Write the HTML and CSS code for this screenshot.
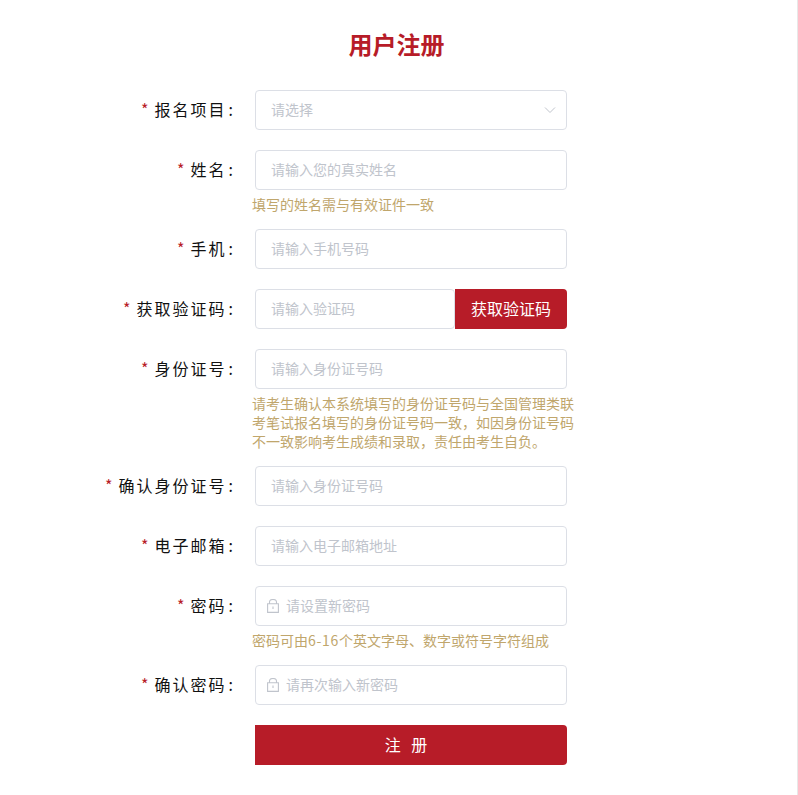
FILE: index.html
```html
<!DOCTYPE html>
<html lang="zh-CN">
  <head>
    <meta charset="UTF-8" />
    <meta name="viewport" content="width=device-width, initial-scale=1.0" />
    <title>用户注册</title>
    <link rel="stylesheet" href="styles.css">
  </head>
  <body>
    <div class="page">
      <h1 class="title">用户注册</h1>
      <form class="form">
        <div class="row">
          <label class="label"><span class="star">*</span>报名项目<span class="colon">:</span></label>
          <div class="field">
            <div class="input-box">
              <input type="text" placeholder="请选择" readonly />
              <svg class="arrow" viewBox="0 0 12 12" width="12" height="12">
                <path d="M1 3.5 6 8.5 11 3.5" fill="none" stroke="#c0c4cc" stroke-width="1" />
              </svg>
            </div>
          </div>
        </div>
        <div class="row">
          <label class="label"><span class="star">*</span>姓名<span class="colon">:</span></label>
          <div class="field">
            <div class="input-box"><input type="text" placeholder="请输入您的真实姓名" /></div>
            <p class="hint">填写的姓名需与有效证件一致</p>
          </div>
        </div>
        <div class="row">
          <label class="label"><span class="star">*</span>手机<span class="colon">:</span></label>
          <div class="field">
            <div class="input-box"><input type="text" placeholder="请输入手机号码" /></div>
          </div>
        </div>
        <div class="row">
          <label class="label"><span class="star">*</span>获取验证码<span class="colon">:</span></label>
          <div class="field code-field">
            <div class="input-box"><input type="text" placeholder="请输入验证码" /></div>
            <button type="button" class="btn-code">获取验证码</button>
          </div>
        </div>
        <div class="row">
          <label class="label"><span class="star">*</span>身份证号<span class="colon">:</span></label>
          <div class="field">
            <div class="input-box"><input type="text" placeholder="请输入身份证号码" /></div>
            <p class="hint">请考生确认本系统填写的身份证号码与全国管理类联考笔试报名填写的身份证号码一致，如因身份证号码不一致影响考生成绩和录取，责任由考生自负。</p>
          </div>
        </div>
        <div class="row">
          <label class="label"><span class="star">*</span>确认身份证号<span class="colon">:</span></label>
          <div class="field">
            <div class="input-box"><input type="text" placeholder="请输入身份证号码" /></div>
          </div>
        </div>
        <div class="row">
          <label class="label"><span class="star">*</span>电子邮箱<span class="colon">:</span></label>
          <div class="field">
            <div class="input-box"><input type="text" placeholder="请输入电子邮箱地址" /></div>
          </div>
        </div>
        <div class="row">
          <label class="label"><span class="star">*</span>密码<span class="colon">:</span></label>
          <div class="field">
            <div class="input-box has-icon">
              <svg class="lock" viewBox="0 0 12 14" width="12" height="14">
                <path d="M2.5 4.8V3.2a3.5 2.7 0 0 1 7 0V4.8M.6 4.8h10.8v8.6H.6zM6 7.5v2.5" fill="none" stroke="#c0c4cc" stroke-width="1.1" />
              </svg>
              <input type="password" placeholder="请设置新密码" />
            </div>
            <p class="hint">密码可由<span class="num">6-16</span>个英文字母、数字或符号字符组成</p>
          </div>
        </div>
        <div class="row">
          <label class="label"><span class="star">*</span>确认密码<span class="colon">:</span></label>
          <div class="field">
            <div class="input-box has-icon">
              <svg class="lock" viewBox="0 0 12 14" width="12" height="14">
                <path d="M2.5 4.8V3.2a3.5 2.7 0 0 1 7 0V4.8M.6 4.8h10.8v8.6H.6zM6 7.5v2.5" fill="none" stroke="#c0c4cc" stroke-width="1.1" />
              </svg>
              <input type="password" placeholder="请再次输入新密码" />
            </div>
          </div>
        </div>
        <div class="row">
          <div class="label"></div>
          <div class="field">
            <button type="button" class="btn-submit">注 册</button>
          </div>
        </div>
      </form>
    </div>
  </body>
</html>
```

FILE: styles.css
```css
* {
  margin: 0;
  padding: 0;
  box-sizing: border-box;
}

html {
  background: #fff;
}

body {
  font-family: "Noto Sans CJK SC", "Noto Sans", sans-serif;
  min-height: 795px;
  border-right: 1px solid #e8e8e8;
  overflow: hidden;
}

.page {
  padding-top: 28px;
}

.title {
  height: 32px;
  line-height: 32px;
  margin-bottom: 30px;
  padding-right: 4px;
  text-align: center;
  font-size: 24px;
  font-weight: 700;
  color: #b71c28;
}

.row {
  display: flex;
  margin-bottom: 20px;
}

.label {
  width: 255px;
  flex: none;
  padding-right: 20px;
  height: 40px;
  line-height: 38px;
  text-align: right;
  font-size: 16px;
  letter-spacing: 2px;
  color: #111;
}

.star {
  color: #b71c28;
  margin-right: 4px;
}

.colon {
  margin-left: 2px;
}

.field {
  width: 312px;
}

.input-box {
  display: flex;
  align-items: center;
  height: 40px;
  padding: 0 15px;
  border: 1px solid #dcdfe6;
  border-radius: 4px;
  background: #fff;
}

.input-box input {
  flex: 1;
  min-width: 0;
  height: 100%;
  padding-bottom: 2px;
  border: 0;
  outline: 0;
  background: transparent;
  font-family: inherit;
  font-size: 14px;
  color: #606266;
}

.input-box input::placeholder {
  color: #c0c4cc;
}

.arrow {
  flex: none;
  margin-right: -5px;
}

.has-icon {
  padding-left: 11px;
}

.lock {
  flex: none;
  margin-right: 7px;
}

.hint {
  width: 324px;
  margin: 0 0 -5px -3px;
  padding-top: 5px;
  font-size: 14px;
  line-height: 19px;
  color: #c0a66c;
}

.num {
  letter-spacing: 0.7px;
}

.code-field {
  display: flex;
}

.code-field .input-box {
  flex: 1;
}

.btn-code {
  flex: none;
  width: 112px;
  height: 40px;
  padding-bottom: 2px;
  border: 0;
  border-radius: 0 4px 4px 0;
  background: #b71c28;
  color: #fff;
  font-family: inherit;
  font-size: 16px;
}

.btn-submit {
  display: block;
  width: 100%;
  height: 40px;
  padding: 0 10px 2px 0;
  border: 0;
  border-radius: 0 4px 4px 0;
  background: #b71c28;
  color: #fff;
  font-family: inherit;
  font-size: 16px;
  word-spacing: 7px;
}
```
